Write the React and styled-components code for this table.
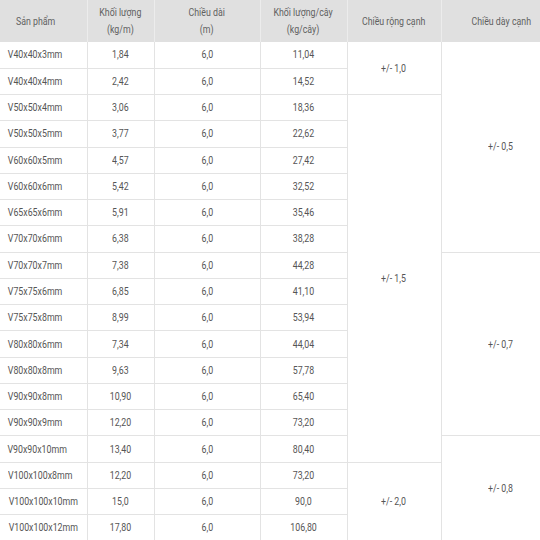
import React from 'react'
import styled, { createGlobalStyle } from 'styled-components'

const GlobalStyle = createGlobalStyle`
  html, body {
    margin: 0;
    padding: 0;
    background: #fff;
    overflow: hidden;
  }
  body {
    font-family: Roboto, "Noto Sans", "Liberation Sans", sans-serif;
  }
`

const rows = [
  ['V40x40x3mm', '1,84', '6,0', '11,04'],
  ['V40x40x4mm', '2,42', '6,0', '14,52'],
  ['V50x50x4mm', '3,06', '6,0', '18,36'],
  ['V50x50x5mm', '3,77', '6,0', '22,62'],
  ['V60x60x5mm', '4,57', '6,0', '27,42'],
  ['V60x60x6mm', '5,42', '6,0', '32,52'],
  ['V65x65x6mm', '5,91', '6,0', '35,46'],
  ['V70x70x6mm', '6,38', '6,0', '38,28'],
  ['V70x70x7mm', '7,38', '6,0', '44,28'],
  ['V75x75x6mm', '6,85', '6,0', '41,10'],
  ['V75x75x8mm', '8,99', '6,0', '53,94'],
  ['V80x80x6mm', '7,34', '6,0', '44,04'],
  ['V80x80x8mm', '9,63', '6,0', '57,78'],
  ['V90x90x8mm', '10,90', '6,0', '65,40'],
  ['V90x90x9mm', '12,20', '6,0', '73,20'],
  ['V90x90x10mm', '13,40', '6,0', '80,40'],
  ['V100x100x8mm', '12,20', '6,0', '73,20'],
  ['V100x100x10mm', '15,0', '6,0', '90,0'],
  ['V100x100x12mm', '17,80', '6,0', '106,80'],
]

// tolerance groups: start row -> [span, text]
const widthTol = { 0: [2, '+/- 1,0'], 2: [14, '+/- 1,5'], 16: [3, '+/- 2,0'] }
const thickTol = { 0: [8, '+/- 0,5'], 8: [7, '+/- 0,7'], 15: [4, '+/- 0,8'] }

const Table = styled.table`
  width: 540px;
  border-collapse: collapse;
  table-layout: fixed;
  color: #555;
`

const HeadRow = styled.tr`
  height: 42px;
  background: #e0e0e0;
`

const Th = styled.th`
  font-weight: 400;
  font-size: 11px;
  line-height: 17px;
  color: #606060;
  text-align: center;
  padding: 0 ${p => p.$pr || 0}px 0 ${p => p.$pl || 0}px;
  border-left: 1px solid #ececec;
  &:first-child { border-left: none; }
`

const Row = styled.tr`
  height: 26.27px;
`

const Td = styled.td`
  font-size: 11px;
  text-align: center;
  vertical-align: middle;
  padding: 0 ${p => p.$pr || 0}px 0 ${p => p.$pl || 0}px;
  border: 1px solid #e3e3e3;
  border-top: none;
  &:first-child { border-left: none; }
  &:last-child { border-right: none; }
`

const Narrow = styled.span`
  display: inline-block;
  white-space: nowrap;
  transform: scaleX(0.8);
`

const App = () => {
  return (
    <>
      <GlobalStyle />
      <Table>
        <colgroup>
          <col style={{ width: 87 }} />
          <col style={{ width: 67 }} />
          <col style={{ width: 106 }} />
          <col style={{ width: 87 }} />
          <col style={{ width: 94 }} />
          <col style={{ width: 99 }} />
        </colgroup>
        <thead>
          <HeadRow>
            <Th $pr={16}><Narrow>Sản phẩm</Narrow></Th>
            <Th><Narrow>Khối lượng<br />(kg/m)</Narrow></Th>
            <Th><Narrow>Chiều dài<br />(m)</Narrow></Th>
            <Th><Narrow>Khối lượng/cây<br />(kg/cây)</Narrow></Th>
            <Th><Narrow>Chiều rộng cạnh</Narrow></Th>
            <Th $pl={20}><Narrow>Chiều dày cạnh</Narrow></Th>
          </HeadRow>
        </thead>
        <tbody>
          {rows.map((r, i) => (
            <Row key={r[0] + i}>
              <Td $pr={16}><Narrow>{r[0]}</Narrow></Td>
              <Td><Narrow>{r[1]}</Narrow></Td>
              <Td><Narrow>{r[2]}</Narrow></Td>
              <Td><Narrow>{r[3]}</Narrow></Td>
              {widthTol[i] && (
                <Td rowSpan={widthTol[i][0]}><Narrow>{widthTol[i][1]}</Narrow></Td>
              )}
              {thickTol[i] && (
                <Td rowSpan={thickTol[i][0]} $pl={20}><Narrow>{thickTol[i][1]}</Narrow></Td>
              )}
            </Row>
          ))}
        </tbody>
      </Table>
    </>
  )
}

export default App
